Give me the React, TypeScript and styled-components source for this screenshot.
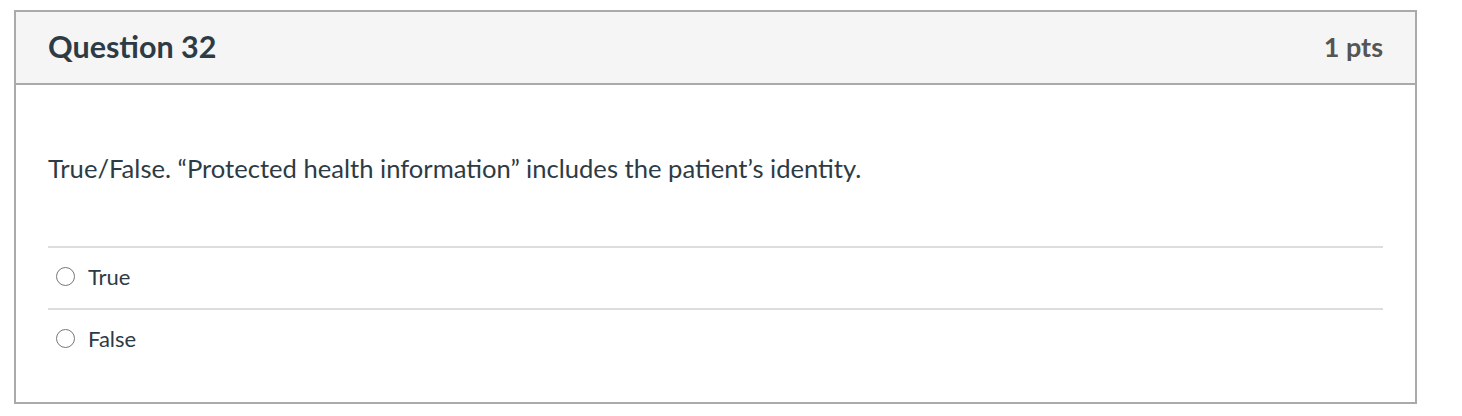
import styled, { createGlobalStyle } from 'styled-components';

const GlobalStyle = createGlobalStyle`
  body {
    margin: 0;
    background: #ffffff;
    font-family: Lato, "Open Sans", sans-serif;
    color: #2d3b45;
  }
`;

const answers = ['True', 'False'];

const App = () => {
  return (
    <>
      <GlobalStyle />
      <S_Page>
        <S_Question>
          <S_Header>
            <S_Title>Question 32</S_Title>
            <S_Points>1 pts</S_Points>
          </S_Header>
          <S_Body>
            <S_Text>
              True/False. “Protected health information” includes the patient’s identity.
            </S_Text>
            <S_Answers>
              {answers.map(answer => (
                <S_Answer key={answer}>
                  <S_Radio type="radio" name="q32" />
                  <S_Label>{answer}</S_Label>
                </S_Answer>
              ))}
            </S_Answers>
          </S_Body>
        </S_Question>
      </S_Page>
    </>
  );
};
export default App;

const S_Page = styled.div`
  padding: 10px 0 0 14px;
`;

const S_Question = styled.div`
  width: 1403px;
  height: 394px;
  box-sizing: border-box;
  border: 2px solid #aaaaaa;
  background: #ffffff;
`;

const S_Header = styled.div`
  display: flex;
  justify-content: space-between;
  align-items: center;
  height: 73px;
  box-sizing: border-box;
  padding: 0 32px 3px 32px;
  background: #f5f5f5;
  border-bottom: 2px solid #aaaaaa;
`;

const S_Title = styled.h2`
  margin: 0;
  font-size: 30.5px;
  font-weight: 700;
  color: #2d3b45;
`;

const S_Points = styled.div`
  font-size: 27px;
  font-weight: 700;
  color: #555555;
`;

const S_Body = styled.div`
  padding: 0 32px;
`;

const S_Text = styled.p`
  margin: 0;
  padding: 67px 0 0 0;
  height: 161px;
  box-sizing: border-box;
  font-size: 25.6px;
  line-height: 32px;
`;

const S_Answers = styled.div`
  display: flex;
  flex-direction: column;
`;

const S_Answer = styled.label`
  display: flex;
  align-items: center;
  height: 62px;
  box-sizing: border-box;
  border-top: 2px solid #dddddd;
  padding: 0 0 4px 8px;
`;

const S_Radio = styled.input`
  appearance: none;
  width: 19px;
  height: 19px;
  margin: 0 13px 0 0;
  border: 1.5px solid #777777;
  border-radius: 50%;
  box-sizing: border-box;
`;

const S_Label = styled.span`
  font-size: 22px;
  color: #2d3b45;
`;
